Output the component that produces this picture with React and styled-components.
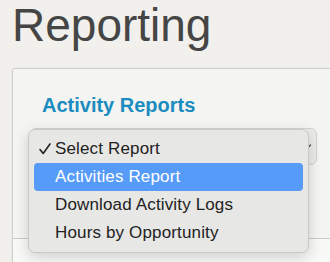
import React from 'react'
import styled, { createGlobalStyle } from "styled-components";

const GlobalStyle = createGlobalStyle`
  html, body {
    margin: 0;
    padding: 0;
    background: #f1f0ec;
    overflow: hidden;
    font-family: "Liberation Sans", Arial, sans-serif;
  }
`;

const Page = styled.div`
  width: 330px;
  height: 262px;
  overflow: hidden;
`;

const Title = styled.h1`
  margin: 0 0 20px 12px;
  padding-top: 2px;
  font-size: 46px;
  line-height: 46px;
  font-weight: 400;
  color: #454545;
`;

const Card = styled.div`
  margin-left: 12px;
  width: 340px;
  background: #f4f4f2;
  border: 1px solid #cfcfcb;
  border-radius: 3px 0 0 0;
  box-shadow: 0 0 2px rgba(0, 0, 0, 0.08);
`;

const Section = styled.div`
  height: 145px;
  padding: 24px 0 0 17px;
  border-bottom: 1px solid #cdcdc9;
`;

const Heading = styled.h2`
  margin: 0 0 11px 12px;
  font-size: 20px;
  line-height: 24px;
  font-weight: 700;
  color: #1b8cbf;
`;

const SelectWrap = styled.div`
  position: relative;
  width: 287px;
`;

const SelectBox = styled.div`
  height: 35px;
  background: #ebebe9;
  border: 1px solid #d3d3cf;
  border-radius: 6px;
  display: flex;
  align-items: center;
  justify-content: flex-end;
  padding-right: 4px;
`;

const Footer = styled.div`
  height: 40px;
  background: #f8f8f6;
`;

const Menu = styled.ul`
  position: absolute;
  left: -2px;
  top: 1px;
  width: 269px;
  margin: 0;
  padding: 5px;
  list-style: none;
  background: #e7e7e5;
  border: 1px solid #c9c9c6;
  border-radius: 7px;
  box-shadow: 0 4px 14px rgba(0, 0, 0, 0.16);
`;

const Item = styled.li`
  position: relative;
  height: 28px;
  line-height: 28px;
  padding-left: 21px;
  border-radius: 4px;
  font-size: 17px;
  letter-spacing: 0.15px;
  color: ${p => (p.active ? "#ffffff" : "#222222")};
  background: ${p => (p.active ? "#569bf7" : "transparent")};
`;

const Check = styled.svg`
  position: absolute;
  left: 5px;
  top: 8px;
`;

const items = ["Select Report", "Activities Report", "Download Activity Logs", "Hours by Opportunity"];

export default function App() {
  return (
    <Page>
      <GlobalStyle />
      <Title>Reporting</Title>
      <Card>
        <Section>
          <Heading>Activity Reports</Heading>
          <SelectWrap>
            <SelectBox>
              <svg width="10" height="8" viewBox="0 0 10 8">
                <path d="M1.5 2 L5 5.5 L8.5 2" fill="none" stroke="#555" strokeWidth="1.4" strokeLinecap="round" />
              </svg>
            </SelectBox>
            <Menu>
              {items.map((label, i) => (
                <Item key={label} active={i === 1}>
                  {i === 0 && (
                    <Check width="12" height="12" viewBox="0 0 12 12">
                      <path d="M1 6.5 L4.2 10.5 L11 1" fill="none" stroke="#222" strokeWidth="1.6" strokeLinecap="round" strokeLinejoin="round" />
                    </Check>
                  )}
                  {label}
                </Item>
              ))}
            </Menu>
          </SelectWrap>
        </Section>
        <Footer />
      </Card>
    </Page>
  )
}
